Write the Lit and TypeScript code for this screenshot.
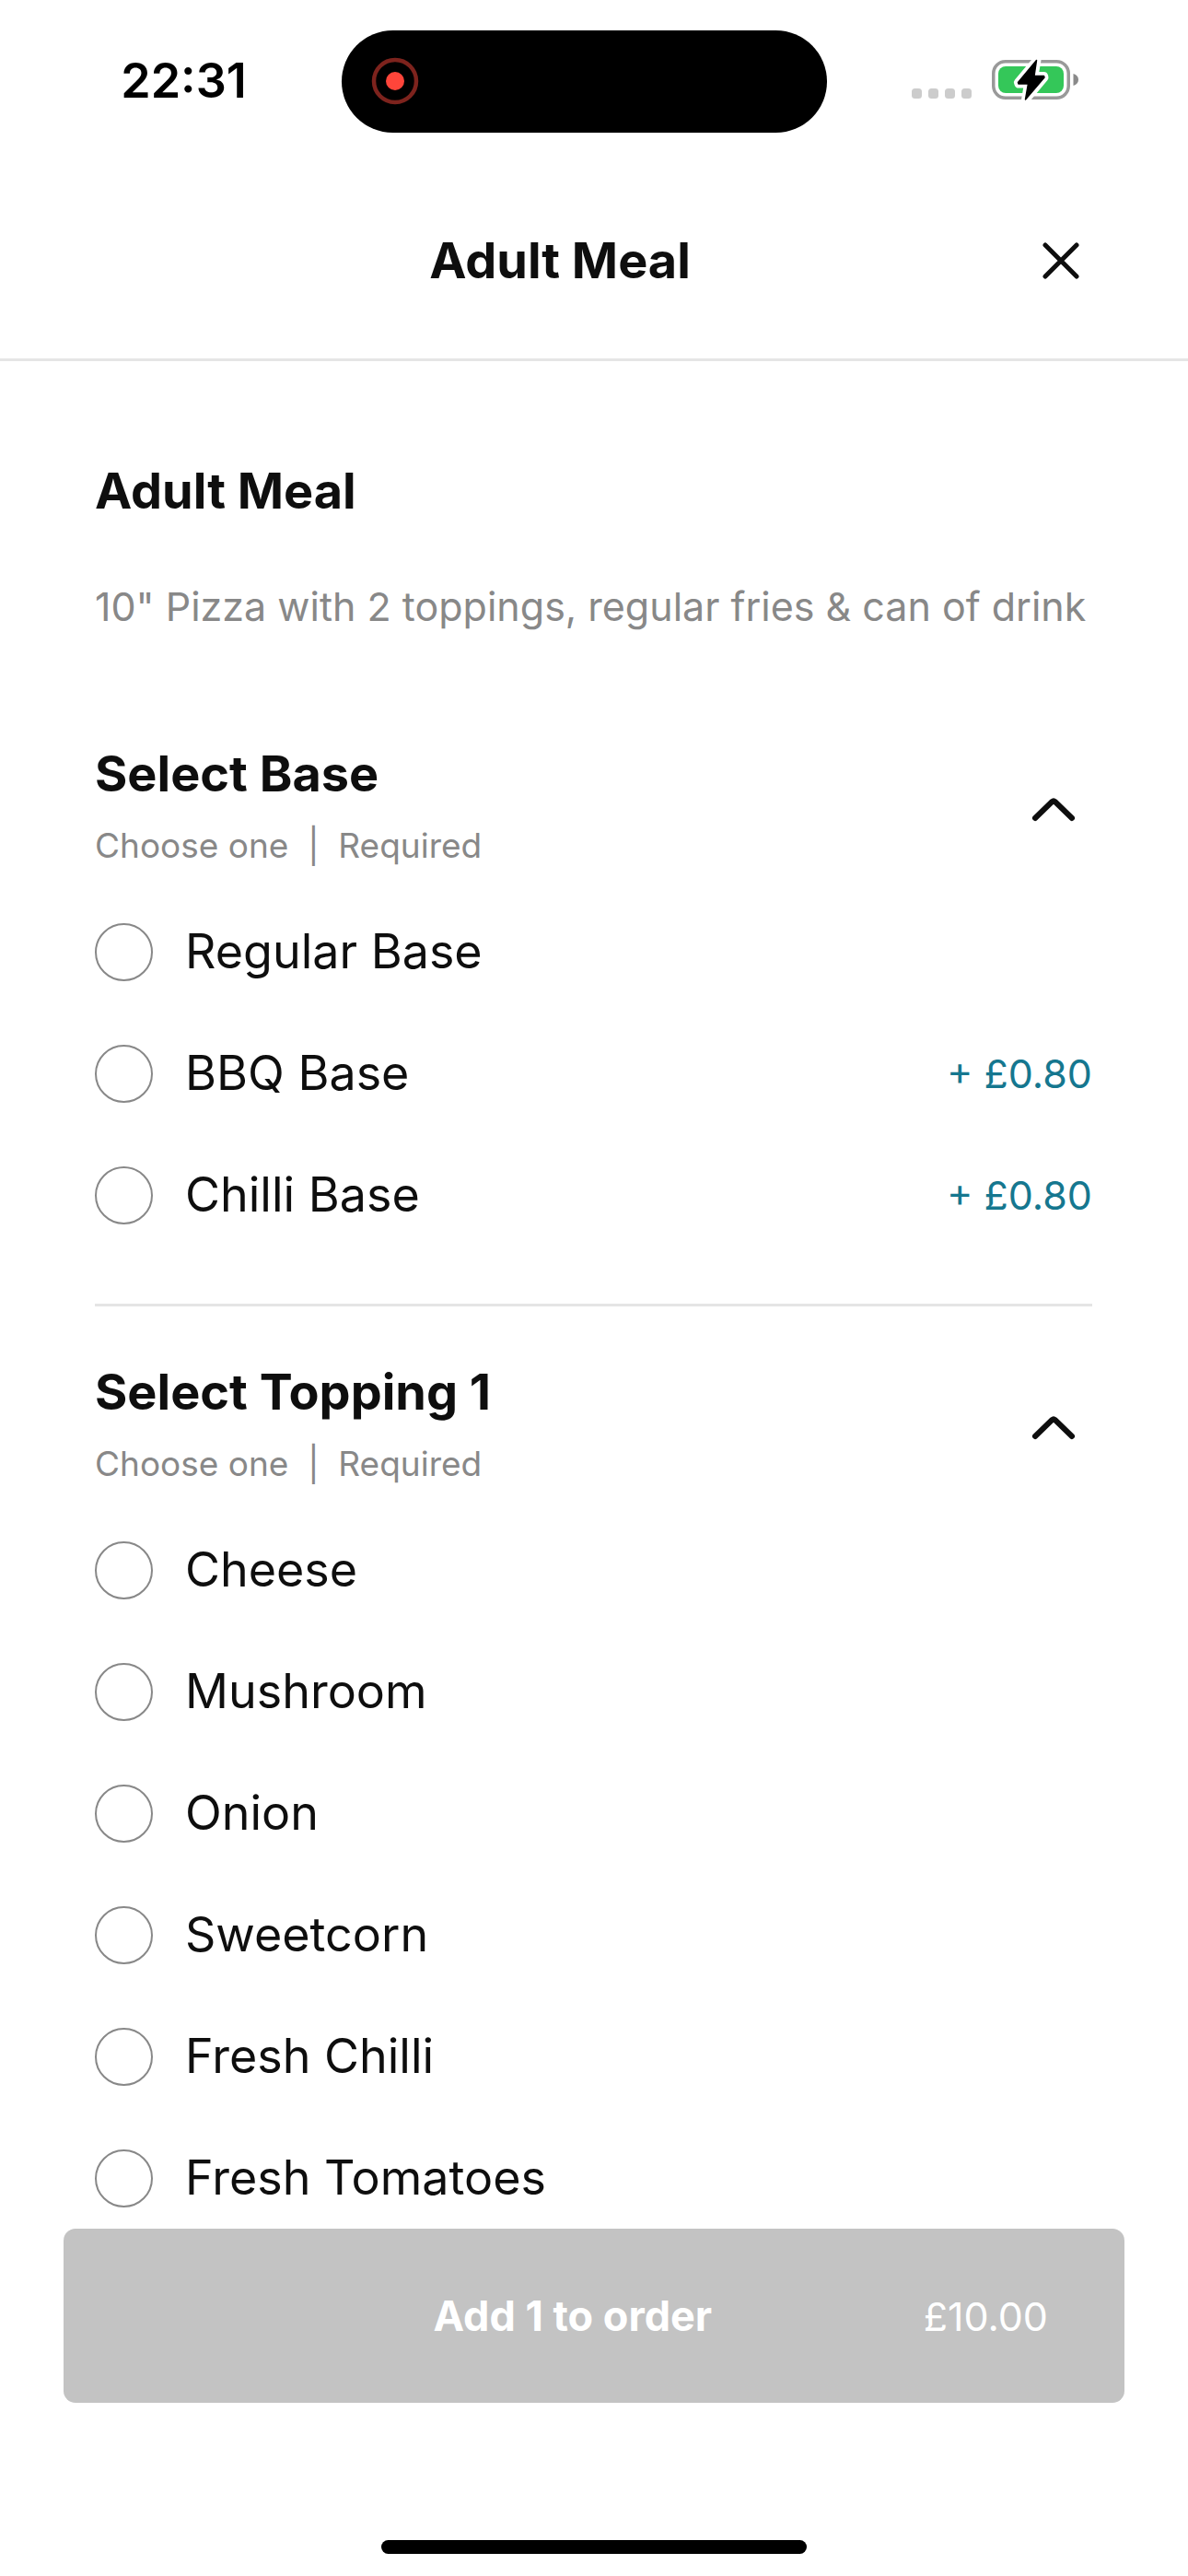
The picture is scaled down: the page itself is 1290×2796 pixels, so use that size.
import { LitElement, html, css, svg } from "lit";
import { customElement, property, state } from "lit/decorators.js";

interface Choice {
  name: string;
  price?: string;
}

interface Group {
  id: string;
  title: string;
  choices: Choice[];
}

const GROUPS: Group[] = [
  {
    id: "base",
    title: "Select Base",
    choices: [
      { name: "Regular Base" },
      { name: "BBQ Base", price: "+ £0.80" },
      { name: "Chilli Base", price: "+ £0.80" },
    ],
  },
  {
    id: "topping-1",
    title: "Select Topping 1",
    choices: [
      { name: "Cheese" },
      { name: "Mushroom" },
      { name: "Onion" },
      { name: "Sweetcorn" },
      { name: "Fresh Chilli" },
      { name: "Fresh Tomatoes" },
    ],
  },
];

@customElement("status-bar")
export class StatusBar extends LitElement {
  static styles = css`
    :host {
      display: grid;
      grid-template-columns: 371fr 527fr 392fr;
      align-items: center;
      height: 176px;
      box-sizing: border-box;
      flex: none;
      color: #000;
    }
    .time {
      padding-left: 28px;
      text-align: center;
      font-size: 52px;
      font-weight: 600;
      line-height: 60px;
    }
    .island {
      display: flex;
      align-items: center;
      height: 111px;
      padding-left: 32px;
      box-sizing: border-box;
      border-radius: 56px;
      background: #000;
    }
    .icons {
      display: flex;
      align-items: flex-end;
      justify-content: flex-end;
      gap: 22px;
      padding-right: 118px;
    }
    svg {
      display: block;
    }
  `;

  render() {
    return html`
      <div class="time">22:31</div>
      <div class="island">
        <svg width="52" height="52" viewBox="0 0 52 52" aria-hidden="true">
          <circle cx="26" cy="26" r="23" fill="none" stroke="#7d231d" stroke-width="4.5" />
          <circle cx="26" cy="26" r="10" fill="#ff453a" />
        </svg>
      </div>
      <div class="icons">
        <svg width="65" height="15" viewBox="0 0 65 15" aria-hidden="true">
          ${[0, 18, 36, 54].map(
            (x) => svg`<rect x=${x} y="0" width="11" height="11" rx="3.5" fill="#ccc" />`,
          )}
        </svg>
        <svg width="95" height="46" viewBox="0 0 95 46" overflow="visible" aria-hidden="true">
          <rect x="1.75" y="1.75" width="81.5" height="39.500" rx="13" fill="none" stroke="#999" stroke-width="3.5" />
          <path d="M88.500 15c3.500 1 5.500 3.500 5.500 6.500s-2 5.500-5.500 6.500z" fill="#8a8a8a" />
          <rect x="7" y="7" width="71" height="29" rx="8" fill="#34c759" />
          <path
            d="M49 0 28.500 24.500 29 26H39.500L36.500 43.500 57 19 56.500 17.500H46z"
            fill="#000"
            stroke="#fff"
            stroke-width="9"
            stroke-linejoin="round"
          />
          <path
            d="M48.500 .5 28.500 24.500 29 26H39.500L36.500 43 57 19 56.500 17.500H46z"
            fill="#000"
            stroke="#000"
            stroke-width="1.5"
            stroke-linejoin="round"
          />
        </svg>
      </div>
    `;
  }
}

@customElement("option-group")
export class OptionGroup extends LitElement {
  @property({ attribute: false }) group!: Group;
  @state() private open = true;

  static styles = css`
    :host {
      display: block;
    }
    .head {
      display: flex;
      justify-content: space-between;
      align-items: stretch;
      height: 160px;
    }
    h2 {
      margin: 0;
      font-size: 54px;
      font-weight: 700;
      line-height: 66px;
    }
    .rule {
      margin: 21px 0 0;
      font-size: 37px;
      line-height: 48px;
      color: #888;
      white-space: pre;
    }
    .toggle {
      width: 84px;
      height: 144px;
      padding: 0;
      border: 0;
      background: none;
      color: inherit;
      display: grid;
      place-items: center;
    }
    .choices {
      margin: 0;
      padding: 0;
      border: 0;
    }
    .choice {
      display: flex;
      align-items: center;
      height: 132px;
      gap: 35px;
    }
    .choice input {
      appearance: none;
      flex: none;
      width: 63px;
      height: 63px;
      margin: 0;
      border: 2px solid #888;
      border-radius: 50%;
      background: #fff;
    }
    .choice input:checked {
      border: 18px solid #15778f;
    }
    .name {
      flex: 1;
      font-size: 52px;
      line-height: 66px;
    }
    .price {
      font-size: 43px;
      line-height: 60px;
      color: #15778f;
    }
  `;

  render() {
    const { id, title, choices } = this.group;
    return html`
      <div class="head">
        <div>
          <h2>${title}</h2>
          <p class="rule">Choose one  |  Required</p>
        </div>
        <button
          class="toggle"
          type="button"
          aria-label="Toggle ${title}"
          aria-expanded=${this.open ? "true" : "false"}
          @click=${() => (this.open = !this.open)}
        >
          <svg width="48" height="26" viewBox="0 0 48 26" aria-hidden="true">
            <path
              d="M4 22 22.5 4q1.5-1.3 3 0L44 22"
              fill="none"
              stroke="#0e0e0e"
              stroke-width="6"
              stroke-linecap="round"
              stroke-linejoin="round"
            />
          </svg>
        </button>
      </div>
      ${this.open
        ? html`<fieldset class="choices" aria-label=${title}>
            ${choices.map(
              (c) => html`<label class="choice">
                <input type="radio" name=${id} />
                <span class="name">${c.name}</span>
                ${c.price ? html`<span class="price">${c.price}</span>` : null}
              </label>`,
            )}
          </fieldset>`
        : null}
    `;
  }
}

@customElement("app-root")
export class AppRoot extends LitElement {
  static styles = css`
    :host {
      display: flex;
      flex-direction: column;
      height: 100vh;
      background: #fff;
      color: #0e0e0e;
      font-family: Inter, "Liberation Sans", sans-serif;
    }
    .header {
      display: flex;
      align-items: center;
      flex: none;
      height: 213px;
      padding: 0 98px 0 104px;
      border-bottom: 3px solid #e5e5e5;
    }
    h1,
    .dish {
      margin: 0;
      font-size: 54px;
      font-weight: 700;
      line-height: 66px;
    }
    h1 {
      flex: 1;
      text-align: center;
    }
    .close {
      width: 80px;
      height: 80px;
      padding: 0;
      border: 0;
      background: none;
      display: grid;
      place-items: center;
    }
    .content {
      flex: 1;
      min-height: 0;
      overflow-y: auto;
      scrollbar-width: none;
      padding: 108px 104px 0 103px;
    }
    .description {
      margin: 64px 0 121px;
      font-size: 43px;
      line-height: 56px;
      color: #888;
    }
    .divider {
      height: 3px;
      margin: 52px 0 60px;
      border: 0;
      background: #e5e5e5;
    }
    .footer {
      flex: none;
      display: flex;
      flex-direction: column;
      align-items: center;
      padding: 0 69px 24px;
    }
    .add {
      display: flex;
      align-items: center;
      width: 100%;
      height: 189px;
      padding: 0 83px 0 172px;
      border: 0;
      border-radius: 13px;
      background: #c3c3c3;
      color: #fff;
      font-family: inherit;
      font-size: 45px;
      line-height: 60px;
    }
    .add-label {
      flex: 1;
      text-align: center;
      font-weight: 700;
    }
    .total {
      font-size: 43px;
    }
    .home {
      width: 462px;
      height: 15px;
      margin-top: 149px;
      border-radius: 8px;
      background: #000;
    }
  `;

  render() {
    return html`
      <status-bar></status-bar>
      <header class="header">
        <h1>Adult Meal</h1>
        <button class="close" type="button" aria-label="Close">
          <svg width="40" height="40" viewBox="0 0 40 40" aria-hidden="true">
            <path d="M3 3 37 37M37 3 3 37" fill="none" stroke="#0e0e0e" stroke-width="5" stroke-linecap="round" />
          </svg>
        </button>
      </header>
      <main class="content">
        <h2 class="dish">Adult Meal</h2>
        <p class="description">10" Pizza with 2 toppings, regular fries &amp; can of drink</p>
        ${GROUPS.map(
          (g, i) => html`
            ${i > 0 ? html`<hr class="divider" />` : null}
            <option-group .group=${g}></option-group>
          `,
        )}
      </main>
      <footer class="footer">
        <button class="add" type="button">
          <span class="add-label">Add 1 to order</span>
          <span class="total">£10.00</span>
        </button>
        <div class="home"></div>
      </footer>
    `;
  }
}
